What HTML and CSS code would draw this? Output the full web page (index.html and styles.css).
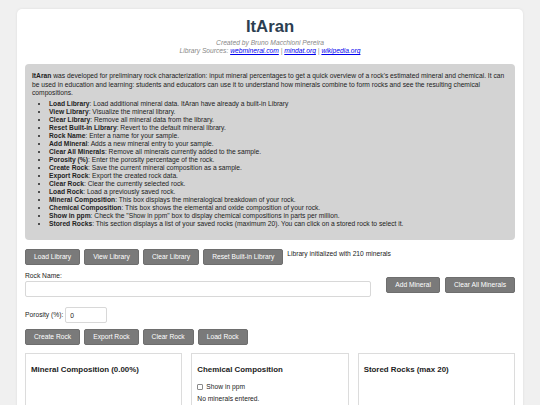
FILE: index.html
```html
<!DOCTYPE html>
<html lang="en">
<head>
<meta charset="utf-8">
<title>ItAran</title>
<link rel="stylesheet" href="styles.css">
</head>
<body>
<div class="container">
  <h1 class="title">ItAran</h1>
  <p class="credits">Created by Bruno Macchioni Pereira<br>Library Sources: <a href="#">webmineral.com</a> | <a href="#">mindat.org</a> | <a href="#">wikipedia.org</a></p>

  <div class="info">
    <p class="intro"><b>ItAran</b> was developed for preliminary rock characterization: input mineral percentages to get a quick overview of a rock's estimated mineral and chemical. It can be used in education and learning: students and educators can use it to understand how minerals combine to form rocks and see the resulting chemical compositions.</p>
    <ul class="help">
      <li><b>Load Library</b>: Load additional mineral data. ItAran have already a built-in Library</li>
      <li><b>View Library</b>: Visualize the mineral library.</li>
      <li><b>Clear Library</b>: Remove all mineral data from the library.</li>
      <li><b>Reset Built-in Library</b>: Revert to the default mineral library.</li>
      <li><b>Rock Name</b>: Enter a name for your sample.</li>
      <li><b>Add Mineral</b>: Adds a new mineral entry to your sample.</li>
      <li><b>Clear All Minerals</b>: Remove all minerals currently added to the sample.</li>
      <li><b>Porosity (%)</b>: Enter the porosity percentage of the rock.</li>
      <li><b>Create Rock</b>: Save the current mineral composition as a sample.</li>
      <li><b>Export Rock</b>: Export the created rock data.</li>
      <li><b>Clear Rock</b>: Clear the currently selected rock.</li>
      <li><b>Load Rock</b>: Load a previously saved rock.</li>
      <li><b>Mineral Composition</b>: This box displays the mineralogical breakdown of your rock.</li>
      <li><b>Chemical Composition</b>: This box shows the elemental and oxide composition of your rock.</li>
      <li><b>Show in ppm</b>: Check the "Show in ppm" box to display chemical compositions in parts per million.</li>
      <li><b>Stored Rocks</b>: This section displays a list of your saved rocks (maximum 20). You can click on a stored rock to select it.</li>
    </ul>
  </div>

  <div class="lib-row">
    <button class="btn">Load Library</button>
    <button class="btn">View Library</button>
    <button class="btn">Clear Library</button>
    <button class="btn">Reset Built-in Library</button>
    <span class="status">Library initialized with 210 minerals</span>
  </div>

  <div class="name-row">
    <div class="name-field">
      <label class="field-label" for="rockName">Rock Name:</label>
      <input class="text-input" id="rockName" type="text">
    </div>
    <div class="name-actions">
      <button class="btn">Add Mineral</button>
      <button class="btn">Clear All Minerals</button>
    </div>
  </div>

  <div class="porosity-row">
    <label class="inline-label" for="porosity">Porosity (%):</label>
    <input class="text-input porosity-input" id="porosity" type="text" value="0">
  </div>

  <div class="rock-row">
    <button class="btn">Create Rock</button>
    <button class="btn">Export Rock</button>
    <button class="btn">Clear Rock</button>
    <button class="btn">Load Rock</button>
  </div>

  <div class="panels">
    <div class="panel">
      <h3 class="panel-title">Mineral Composition (0.00%)</h3>
    </div>
    <div class="panel">
      <h3 class="panel-title">Chemical Composition</h3>
      <label class="check"><input type="checkbox" class="check-box"> Show in ppm</label>
      <div class="empty">No minerals entered.</div>
    </div>
    <div class="panel">
      <h3 class="panel-title">Stored Rocks (max 20)</h3>
    </div>
  </div>
</div>
</body>
</html>
```
FILE: styles.css
```css
html, body {
  margin: 0;
  padding: 0;
  background: #f0f0f0;
}

body {
  font-family: "Liberation Sans", Arial, sans-serif;
  font-size: 6.7px;
  line-height: 1.2;
  color: #222;
}

.container {
  width: 506px;
  box-sizing: border-box;
  margin: 9px auto 0;
  padding: 6px 8px 20px;
  background: #fff;
  border-radius: 5px;
  box-shadow: 0 0 3px rgba(0, 0, 0, 0.08);
}

.title {
  margin: 0;
  text-align: center;
  font-size: 16.7px;
  line-height: 24px;
  font-weight: bold;
  color: #2c3e50;
}

.credits {
  margin: 0;
  text-align: center;
  font-style: italic;
  color: #888;
  line-height: 8px;
}

.credits a {
  color: #0000ee;
}

.info {
  margin-top: 9px;
  background: #d3d3d3;
  border-radius: 4px;
  padding: 8px 7px 6px;
}

.intro {
  margin: 0 0 2.4px;
  line-height: 8.5px;
}

.help {
  margin: 0 0 6px;
  padding-left: 17px;
  line-height: 8px;
}

.btn {
  font-family: "Liberation Sans", Arial, sans-serif;
  font-size: 6.7px;
  line-height: 8px;
  height: 16px;
  padding: 0 8px;
  background: #7a7a7a;
  color: #fff;
  border: 1px solid #6e6e6e;
  border-radius: 2px;
}

.lib-row {
  margin-top: 9px;
  display: flex;
  align-items: flex-start;
  gap: 4px;
}

.status {
  padding-top: 1px;
}

.name-row {
  margin-top: 7px;
  display: flex;
  align-items: center;
  gap: 15px;
}

.name-field {
  flex: 1;
  display: flex;
  flex-direction: column;
  gap: 1px;
}

.field-label {
  line-height: 8.5px;
}

.text-input {
  box-sizing: border-box;
  height: 16px;
  border: 1px solid #d8d8d8;
  border-radius: 2px;
  font-family: "Liberation Sans", Arial, sans-serif;
  font-size: 6.7px;
  color: #222;
  padding: 0 4px;
  margin: 0;
}

.name-actions {
  display: flex;
  gap: 5px;
}

.porosity-row {
  margin-top: 10px;
  display: flex;
  align-items: center;
  gap: 2px;
}

.porosity-input {
  width: 42px;
}

.rock-row {
  margin-top: 6px;
  display: flex;
  gap: 4px;
}

.panels {
  margin-top: 8px;
  display: grid;
  grid-template-columns: repeat(3, 1fr);
  gap: 9px;
}

.panel {
  border: 1px solid #dcdcdc;
  padding: 6px 5px;
  min-height: 90px;
}

.panel-title {
  margin: 5px 0 8px;
  font-size: 7.9px;
  line-height: 10px;
  font-weight: bold;
}

.check {
  display: flex;
  align-items: center;
  line-height: 8px;
}

.check-box {
  appearance: none;
  -webkit-appearance: none;
  box-sizing: border-box;
  width: 6px;
  height: 6px;
  margin: 0 3px 0 0;
  border: 1px solid #8a8a8a;
  border-radius: 1px;
  background: #fff;
}

.empty {
  margin-top: 4px;
  line-height: 8px;
}
```
